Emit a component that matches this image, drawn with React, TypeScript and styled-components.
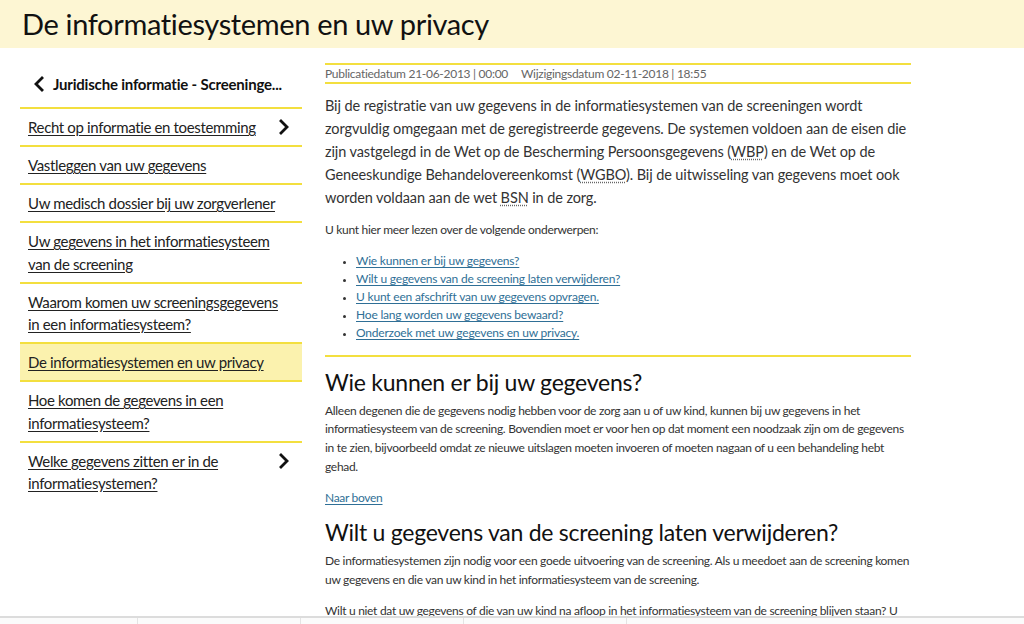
import styled, { createGlobalStyle } from 'styled-components';

const GlobalStyle = createGlobalStyle`
  html, body {
    margin: 0;
    padding: 0;
    background: #fff;
  }

  body {
    font-family: Lato, "Noto Sans", sans-serif;
    color: #222;
    overflow: hidden;
  }
`;

const YELLOW = '#f3df3f';

const NAV_ITEMS = [
  { label: 'Recht op informatie en toestemming', hasChildren: true },
  { label: 'Vastleggen van uw gegevens' },
  { label: 'Uw medisch dossier bij uw zorgverlener' },
  { label: 'Uw gegevens in het informatiesysteem van de screening' },
  { label: 'Waarom komen uw screeningsgegevens in een informatiesysteem?' },
  { label: 'De informatiesystemen en uw privacy', active: true },
  { label: 'Hoe komen de gegevens in een informatiesysteem?' },
  { label: 'Welke gegevens zitten er in de informatiesystemen?', hasChildren: true },
];

const TOPICS = [
  'Wie kunnen er bij uw gegevens?',
  'Wilt u gegevens van de screening laten verwijderen?',
  'U kunt een afschrift van uw gegevens opvragen.',
  'Hoe lang worden uw gegevens bewaard?',
  'Onderzoek met uw gegevens en uw privacy.',
];

const Chevron = ({ left }: { left?: boolean }) => (
  <svg width="12" height="16" viewBox="0 0 12 16" fill="none">
    <path
      d={left ? 'M9 2L3 8l6 6' : 'M3 2l6 6-6 6'}
      stroke="#111"
      strokeWidth="2.8"
      strokeLinecap="square"
      strokeLinejoin="miter"
    />
  </svg>
);

const App = () => {
  return (
    <>
      <GlobalStyle />
      <Header>
        <PageTitle>De informatiesystemen en uw privacy</PageTitle>
      </Header>

      <Layout>
        <Sidebar>
          <BackLink href="#">
            <Chevron left />
            <BackText>Juridische informatie - Screeninge...</BackText>
          </BackLink>

          <NavList>
            {NAV_ITEMS.map((item) => (
              <NavItem key={item.label} $active={item.active}>
                <NavLink href="#">{item.label}</NavLink>
                {item.hasChildren && (
                  <NavArrow>
                    <Chevron />
                  </NavArrow>
                )}
              </NavItem>
            ))}
          </NavList>
        </Sidebar>

        <Main>
          <Meta>
            <span>Publicatiedatum 21-06-2013 | 00:00</span>
            <span>Wijzigingsdatum 02-11-2018 | 18:55</span>
          </Meta>

          <Lead>
            Bij de registratie van uw gegevens in de informatiesystemen van de screeningen wordt
            zorgvuldig omgegaan met de geregistreerde gegevens. De systemen voldoen aan de eisen die
            zijn vastgelegd in de Wet op de Bescherming Persoonsgegevens (<Abbr>WBP</Abbr>) en de Wet
            op de Geneeskundige Behandelovereenkomst (<Abbr>WGBO</Abbr>). Bij de uitwisseling van
            gegevens moet ook worden voldaan aan de wet <Abbr>BSN</Abbr> in de zorg.
          </Lead>

          <Text>U kunt hier meer lezen over de volgende onderwerpen:</Text>

          <TopicList>
            {TOPICS.map((topic) => (
              <li key={topic}>
                <Link href="#">{topic}</Link>
              </li>
            ))}
          </TopicList>

          <Divider />

          <SectionTitle>Wie kunnen er bij uw gegevens?</SectionTitle>
          <Text $tight>
            Alleen degenen die de gegevens nodig hebben voor de zorg aan u of uw kind, kunnen bij uw
            gegevens in het informatiesysteem van de screening. Bovendien moet er voor hen op dat
            moment een noodzaak zijn om de gegevens in te zien, bijvoorbeeld omdat ze nieuwe
            uitslagen moeten invoeren of moeten nagaan of u een behandeling hebt gehad.
          </Text>
          <Text>
            <Link href="#">Naar boven</Link>
          </Text>

          <SectionTitle>Wilt u gegevens van de screening laten verwijderen?</SectionTitle>
          <Text $tight>
            De informatiesystemen zijn nodig voor een goede uitvoering van de screening. Als u
            meedoet aan de screening komen uw gegevens en die van uw kind in het informatiesysteem
            van de screening.
          </Text>
          <Text>
            Wilt u niet dat uw gegevens of die van uw kind na afloop in het informatiesysteem van de
            screening blijven staan? U kunt de organisatie die de screening uitvoert vragen om uw
            gegevens te verwijderen.
          </Text>
        </Main>
      </Layout>

      <BottomBar>
        <BottomCell />
        <BottomCell />
        <BottomCell />
        <BottomCell />
      </BottomBar>
    </>
  );
};

const Header = styled.header`
  display: flex;
  align-items: center;

  height: 48px;
  padding-left: 22px;

  background-color: #fdf6d3;
`;

const PageTitle = styled.h1`
  margin: 0;

  font-size: 29px;
  font-weight: 400;
  line-height: 40px;
  letter-spacing: -0.35px;
  color: #111;
`;

const Layout = styled.div`
  display: flex;
  align-items: flex-start;
  gap: 23px;

  padding: 0 20px;
`;

const Sidebar = styled.nav`
  flex: 0 0 282px;
  padding-top: 12px;
`;

const BackLink = styled.a`
  display: flex;
  align-items: center;
  gap: 8px;

  height: 47px;
  padding-left: 13px;

  color: #111;
  text-decoration: none;
`;

const BackText = styled.span`
  font-size: 15px;
  font-weight: 700;
  letter-spacing: -0.2px;
  white-space: nowrap;
`;

const NavList = styled.ul`
  margin: 0;
  padding: 0;
  list-style: none;
`;

const NavItem = styled.li<{ $active?: boolean }>`
  display: flex;
  justify-content: space-between;
  align-items: flex-start;
  gap: 10px;

  padding: 7px 12px 6.5px 8px;
  border-top: 2px solid ${YELLOW};
  border-bottom: ${({ $active }) => ($active ? `2px solid ${YELLOW}` : '0')};
  margin-bottom: ${({ $active }) => ($active ? '-2px' : '0')};

  background-color: ${({ $active }) => ($active ? '#fbf2ae' : 'transparent')};
`;

const NavLink = styled.a`
  font-size: 15px;
  line-height: 22.5px;
  letter-spacing: -0.35px;
  color: #222;
  text-decoration: underline;
  text-underline-offset: 2px;
`;

const NavArrow = styled.span`
  display: flex;
  align-items: center;
  height: 22.5px;
  flex-shrink: 0;
`;

const Main = styled.main`
  flex: 0 0 586px;
  padding-top: 15px;
`;

const Meta = styled.div`
  display: flex;
  gap: 13px;

  border-top: 2px solid ${YELLOW};
  border-bottom: 2px solid ${YELLOW};

  font-size: 12px;
  line-height: 17px;
  letter-spacing: -0.28px;
  color: #666;
`;

const Lead = styled.p`
  margin: 10px 0 0;

  font-size: 14.5px;
  line-height: 23px;
  letter-spacing: -0.1px;
  color: #333;
`;

const Abbr = styled.abbr`
  text-decoration: underline dotted #666;
  text-underline-offset: 2px;
`;

const Text = styled.p<{ $tight?: boolean }>`
  margin: ${({ $tight }) => ($tight ? '5px 0 0' : '12px 0 0')};

  font-size: 12px;
  line-height: 18.7px;
  letter-spacing: -0.3px;
  color: #333;
`;

const TopicList = styled.ul`
  margin: 12px 0 0;
  padding-left: 31px;

  font-size: 12px;
  line-height: 18px;
  letter-spacing: -0.2px;

  li::marker {
    color: #333;
    font-size: 10px;
  }
`;

const Link = styled.a`
  color: #2f6f96;
  text-decoration: underline;
  text-underline-offset: 2px;
`;

const Divider = styled.hr`
  height: 2px;
  margin: 13px 0 0;
  border: 0;

  background-color: ${YELLOW};
`;

const SectionTitle = styled.h2`
  margin: 10px 0 0;

  font-size: 23px;
  font-weight: 400;
  line-height: 30px;
  letter-spacing: -0.25px;
  color: #111;
`;

const BottomBar = styled.footer`
  position: fixed;
  left: 0;
  right: 0;
  bottom: 0;

  display: flex;
  height: 6px;

  border-top: 2px solid #dcdcdc;
  background-color: #fbfbfb;
`;

const BottomCell = styled.div`
  flex: 0 0 162px;
  border-right: 1px solid #e4e4e4;

  &:first-child {
    flex-basis: 137px;
  }
`;

export default App;
